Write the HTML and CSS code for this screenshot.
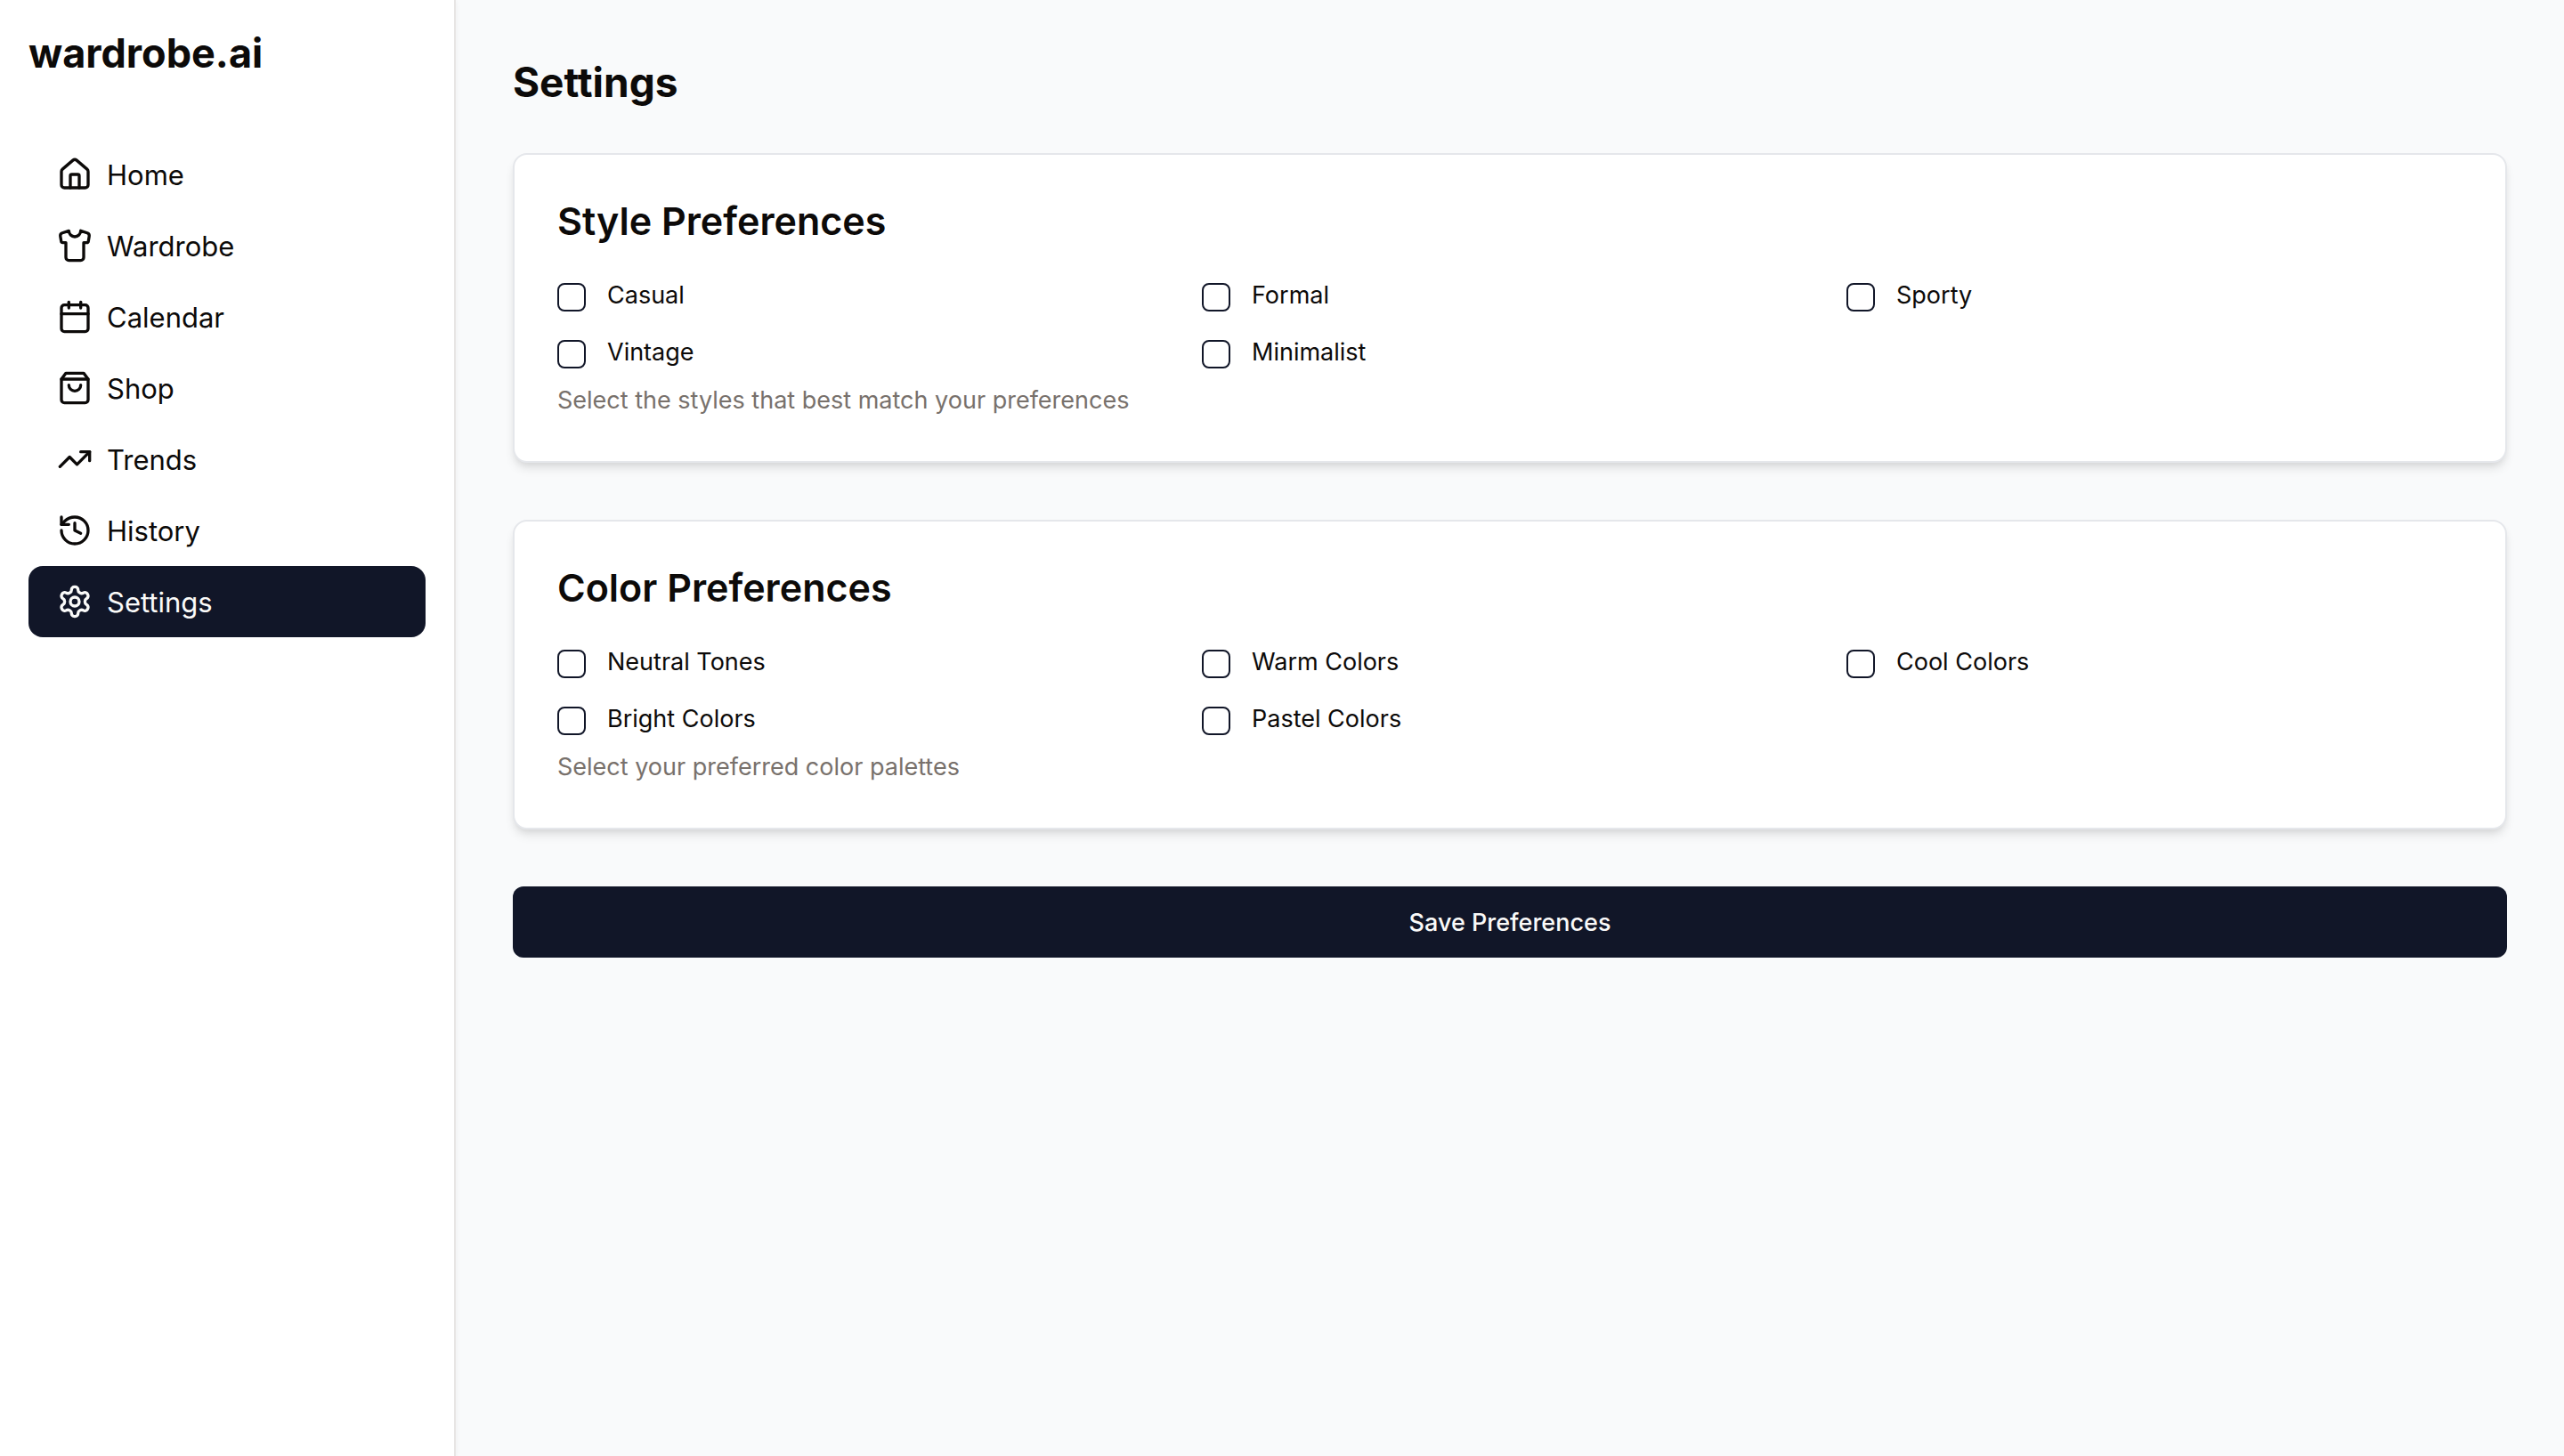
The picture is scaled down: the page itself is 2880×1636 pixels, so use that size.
FILE: index.html
```html
<!DOCTYPE html>
<html lang="en">
<head>
<meta charset="utf-8">
<meta name="viewport" content="width=device-width, initial-scale=1">
<title>Settings - wardrobe.ai</title>
<link rel="stylesheet" href="styles.css">
</head>
<body>
<div class="app">
  <aside class="sidebar">
    <div class="brand">wardrobe.ai</div>
    <nav class="nav" aria-label="Main">
      <a class="nav-link" href="#home">
        <svg class="icon" viewBox="0 0 24 24" aria-hidden="true"><path d="M15 21v-8a1 1 0 0 0-1-1h-4a1 1 0 0 0-1 1v8"/><path d="M3 10a2 2 0 0 1 .709-1.528l7-5.999a2 2 0 0 1 2.582 0l7 5.999A2 2 0 0 1 21 10v9a2 2 0 0 1-2 2H5a2 2 0 0 1-2-2z"/></svg>
        <span>Home</span>
      </a>
      <a class="nav-link" href="#wardrobe">
        <svg class="icon" viewBox="0 0 24 24" aria-hidden="true"><path d="M20.38 3.46 16 2a4 4 0 0 1-8 0L3.62 3.46a2 2 0 0 0-1.34 2.23l.58 3.47a1 1 0 0 0 .99.84H6v10c0 1.1.9 2 2 2h8a2 2 0 0 0 2-2V10h2.15a1 1 0 0 0 .99-.84l.58-3.47a2 2 0 0 0-1.34-2.23z"/></svg>
        <span>Wardrobe</span>
      </a>
      <a class="nav-link" href="#calendar">
        <svg class="icon" viewBox="0 0 24 24" aria-hidden="true"><path d="M8 2v4"/><path d="M16 2v4"/><rect width="18" height="18" x="3" y="4" rx="2"/><path d="M3 10h18"/></svg>
        <span>Calendar</span>
      </a>
      <a class="nav-link" href="#shop">
        <svg class="icon" viewBox="0 0 24 24" aria-hidden="true"><path d="M6 2 3 6v14a2 2 0 0 0 2 2h14a2 2 0 0 0 2-2V6l-3-4Z"/><path d="M3 6h18"/><path d="M16 10a4 4 0 0 1-8 0"/></svg>
        <span>Shop</span>
      </a>
      <a class="nav-link" href="#trends">
        <svg class="icon" viewBox="0 0 24 24" aria-hidden="true"><polyline points="22 7 13.5 15.5 8.5 10.5 2 17"/><polyline points="16 7 22 7 22 13"/></svg>
        <span>Trends</span>
      </a>
      <a class="nav-link" href="#history">
        <svg class="icon" viewBox="0 0 24 24" aria-hidden="true"><path d="M3 12a9 9 0 1 0 9-9 9.75 9.75 0 0 0-6.74 2.74L3 8"/><path d="M3 3v5h5"/><path d="M12 7v5l4 2"/></svg>
        <span>History</span>
      </a>
      <a class="nav-link nav-link-active" href="#settings" aria-current="page">
        <svg class="icon" viewBox="0 0 24 24" aria-hidden="true"><path d="M12.22 2h-.44a2 2 0 0 0-2 2v.18a2 2 0 0 1-1 1.73l-.43.25a2 2 0 0 1-2 0l-.15-.08a2 2 0 0 0-2.73.73l-.22.38a2 2 0 0 0 .73 2.73l.15.1a2 2 0 0 1 1 1.72v.51a2 2 0 0 1-1 1.74l-.15.09a2 2 0 0 0-.73 2.73l.22.38a2 2 0 0 0 2.73.73l.15-.08a2 2 0 0 1 2 0l.43.25a2 2 0 0 1 1 1.73V20a2 2 0 0 0 2 2h.44a2 2 0 0 0 2-2v-.18a2 2 0 0 1 1-1.73l.43-.25a2 2 0 0 1 2 0l.15.08a2 2 0 0 0 2.73-.73l.22-.39a2 2 0 0 0-.73-2.73l-.15-.08a2 2 0 0 1-1-1.74v-.5a2 2 0 0 1 1-1.74l.15-.09a2 2 0 0 0 .73-2.73l-.22-.38a2 2 0 0 0-2.73-.73l-.15.08a2 2 0 0 1-2 0l-.43-.25a2 2 0 0 1-1-1.73V4a2 2 0 0 0-2-2z"/><circle cx="12" cy="12" r="3"/></svg>
        <span>Settings</span>
      </a>
    </nav>
  </aside>
  <main class="main">
    <h1 class="page-title">Settings</h1>
    <form class="form">
      <section class="card" aria-labelledby="style-title">
        <h2 class="card-title" id="style-title">Style Preferences</h2>
        <div class="options">
          <label class="option"><input class="checkbox" type="checkbox" name="style" value="casual"><span>Casual</span></label>
          <label class="option"><input class="checkbox" type="checkbox" name="style" value="formal"><span>Formal</span></label>
          <label class="option"><input class="checkbox" type="checkbox" name="style" value="sporty"><span>Sporty</span></label>
          <label class="option"><input class="checkbox" type="checkbox" name="style" value="vintage"><span>Vintage</span></label>
          <label class="option"><input class="checkbox" type="checkbox" name="style" value="minimalist"><span>Minimalist</span></label>
        </div>
        <p class="hint">Select the styles that best match your preferences</p>
      </section>
      <section class="card" aria-labelledby="color-title">
        <h2 class="card-title" id="color-title">Color Preferences</h2>
        <div class="options">
          <label class="option"><input class="checkbox" type="checkbox" name="color" value="neutral"><span>Neutral Tones</span></label>
          <label class="option"><input class="checkbox" type="checkbox" name="color" value="warm"><span>Warm Colors</span></label>
          <label class="option"><input class="checkbox" type="checkbox" name="color" value="cool"><span>Cool Colors</span></label>
          <label class="option"><input class="checkbox" type="checkbox" name="color" value="bright"><span>Bright Colors</span></label>
          <label class="option"><input class="checkbox" type="checkbox" name="color" value="pastel"><span>Pastel Colors</span></label>
        </div>
        <p class="hint">Select your preferred color palettes</p>
      </section>
      <button class="save" type="submit">Save Preferences</button>
    </form>
  </main>
</div>
</body>
</html>
```
FILE: styles.css
```css
*, *::before, *::after { box-sizing: border-box; }

body {
  margin: 0;
  font-family: Inter, "Liberation Sans", sans-serif;
  font-size: 27px;
  color: #0c0a09;
  background: #f9fafb;
}

h1, h2, p { margin: 0; }

.app {
  display: flex;
  min-height: 100vh;
}

.sidebar {
  flex: 0 0 512px;
  padding: 32px;
  background: #fff;
  border-right: 2px solid #e7e5e4;
  box-shadow: 0 2px 6px rgb(0 0 0 / 6%);
}

.brand {
  margin-bottom: 68px;
  font-size: 45px;
  font-weight: 700;
  line-height: 56px;
}

.nav {
  display: flex;
  flex-direction: column;
}

.nav-link {
  display: flex;
  align-items: center;
  gap: 16px;
  height: 80px;
  padding: 0 32px;
  border-radius: 16px;
  font-size: 31px;
  color: #0c0a09;
  text-decoration: none;
}

.nav-link-active {
  color: #fafaf9;
  background: #111628;
}

.icon {
  flex: none;
  width: 40px;
  height: 40px;
  fill: none;
  stroke: currentColor;
  stroke-width: 2;
  stroke-linecap: round;
  stroke-linejoin: round;
}

.main {
  flex: 1;
  min-width: 0;
  padding: 64px;
}

.page-title {
  margin-bottom: 52px;
  font-size: 46px;
  font-weight: 700;
  line-height: 56px;
}

.form {
  display: flex;
  flex-direction: column;
  gap: 64px;
}

.card {
  padding: 48px;
  background: #fff;
  border: 2px solid #e5e7eb;
  border-radius: 16px;
  box-shadow: 0 8px 12px -2px rgb(0 0 0 / 10%), 0 4px 8px -4px rgb(0 0 0 / 10%);
}

.card-title {
  margin-bottom: 44px;
  font-size: 43px;
  font-weight: 600;
  line-height: 52px;
}

.options {
  display: grid;
  grid-template-columns: repeat(3, minmax(0, 1fr));
  gap: 32px;
}

.option {
  display: flex;
  align-items: flex-start;
  gap: 24px;
  min-height: 32px;
  line-height: 28px;
}

.checkbox {
  appearance: none;
  flex: none;
  width: 32px;
  height: 32px;
  margin: 0;
  background: #fff;
  border: 2px solid #111628;
  border-radius: 8px;
}

.checkbox:checked { background: #111628; }

.hint {
  margin-top: 16px;
  line-height: 40px;
  color: #78716c;
}

.save {
  height: 80px;
  padding: 0 32px;
  border: 0;
  border-radius: 12px;
  font: inherit;
  font-weight: 500;
  color: #fafaf9;
  background: #111628;
  cursor: pointer;
}
```
